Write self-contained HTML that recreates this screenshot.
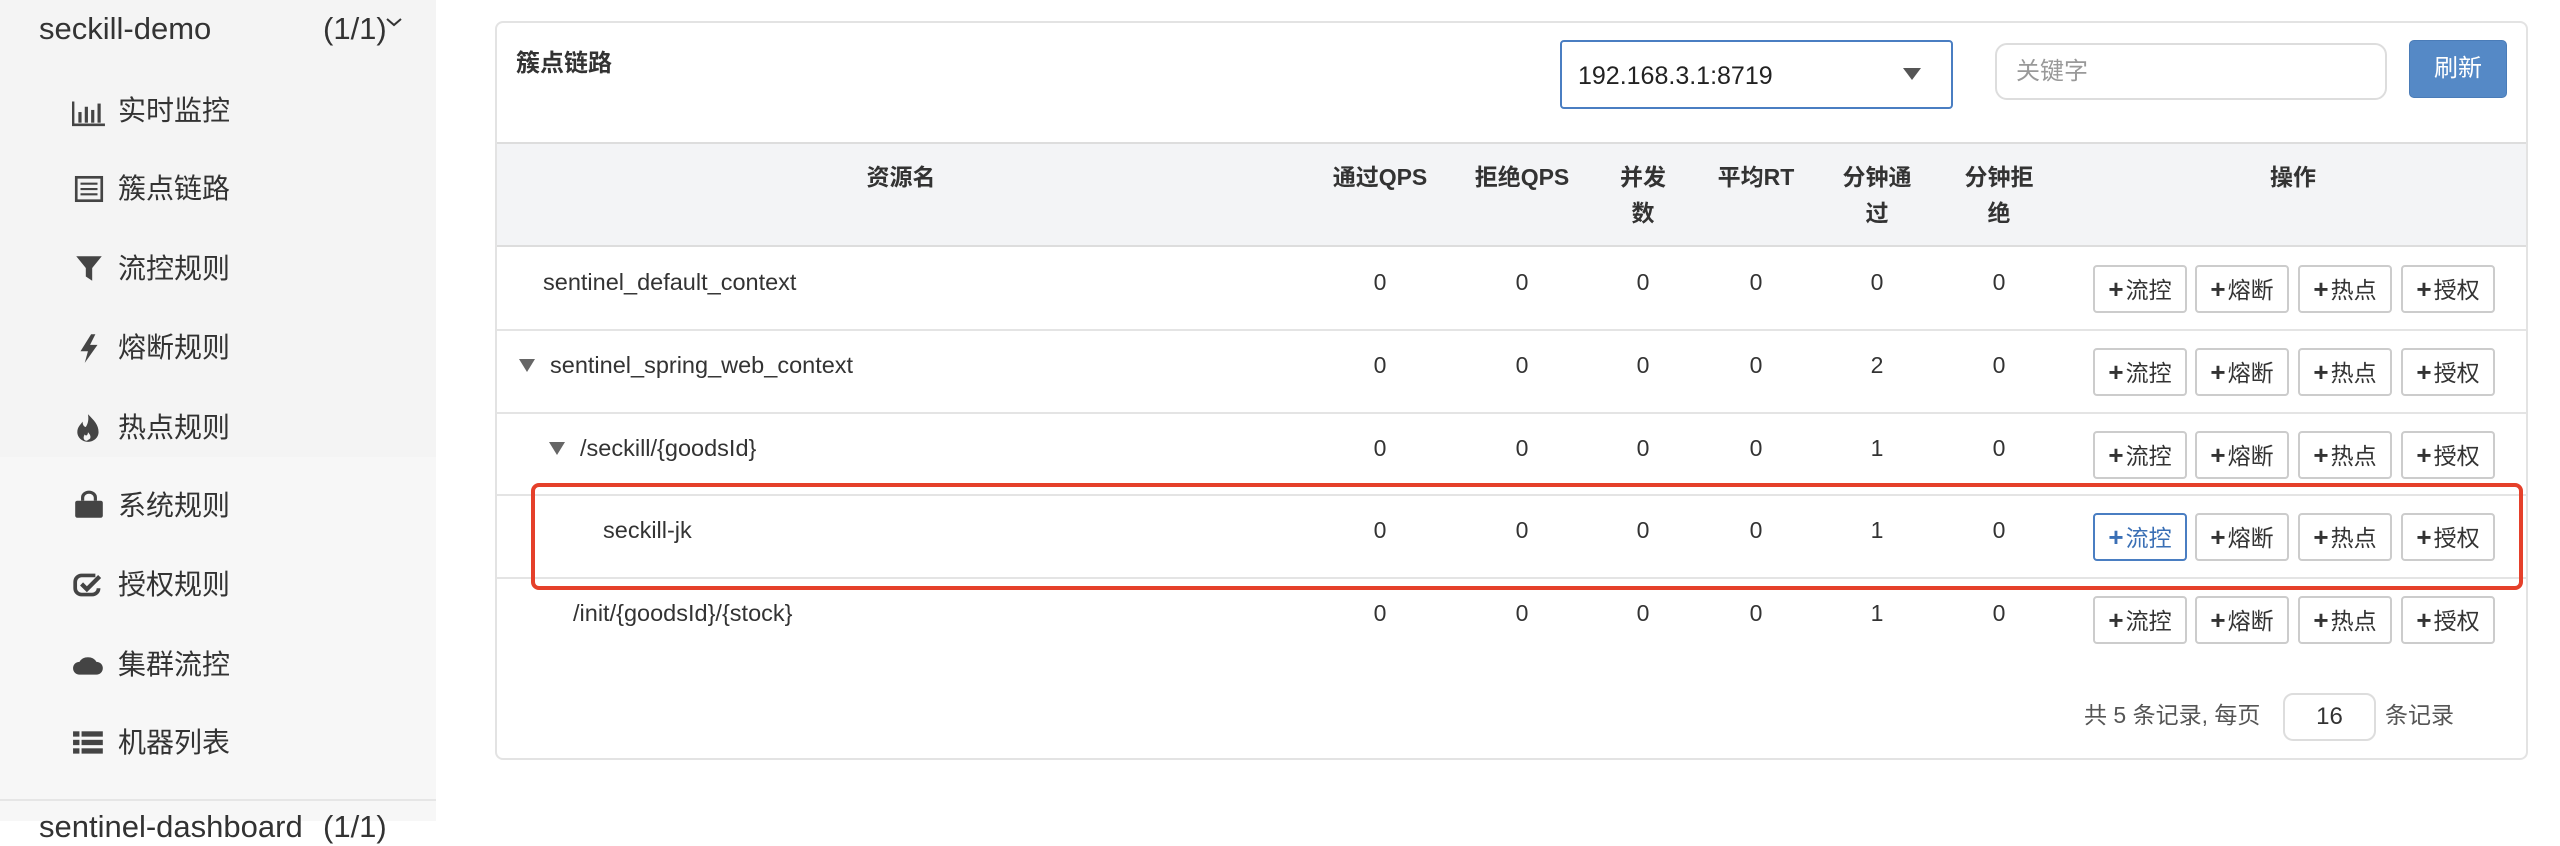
<!DOCTYPE html>
<html><head><meta charset="utf-8"><style>
*{margin:0;padding:0;box-sizing:border-box}
body{width:2560px;height:821px;overflow:hidden;background:#fff;font-family:"Liberation Sans","Noto Sans CJK SC",sans-serif;color:#333;position:relative}
.a{position:absolute;white-space:nowrap}
#side{position:absolute;left:0;top:0;width:436px;height:821px;background:#f7f7f7}
#side .top{position:absolute;left:0;top:0;width:436px;height:457px;background:#f4f4f4}
.si{position:absolute;left:118px;font-size:28px;color:#333;line-height:34px}
.ic{position:absolute;left:72px;width:34px;height:32px}
.panel{position:absolute;left:495px;top:21px;width:2033px;height:739px;border:2px solid #e3e3e3;border-radius:8px;background:#fff}
.th{position:absolute;font-size:23px;color:#333;text-align:center;line-height:36px;font-weight:bold}
.td{position:absolute;font-size:23.5px;color:#333;line-height:30px}
.num{position:absolute;font-size:23px;color:#333;width:60px;text-align:center;line-height:30px}
.btn{position:absolute;width:94px;height:48px;border:2px solid #ccc;border-radius:4px;background:#fff;font-size:23px;line-height:44px;text-align:center;color:#333}
.btn b{font-size:26px;margin-right:2px}
.hl{position:absolute;left:497px;width:2029px;height:2px;background:#e4e4e4}
</style></head><body>
<div id="side"><div class="top"></div>
<div class="a" style="left:39px;top:10px;font-size:31px;line-height:38px">seckill-demo</div>
<div class="a" style="left:323px;top:10px;font-size:31px;line-height:38px">(1/1)</div>
<svg class="a" style="left:386px;top:18px" width="16" height="10"><path d="M1 1l7 6 7-6" stroke="#333" stroke-width="2" fill="none"/></svg>
<svg class="ic" style="top:95px" viewBox="0 0 32 30"><path d="M1 6v22h30" stroke="#444" stroke-width="2.5" fill="none"/><rect x="6" y="16" width="3" height="10" fill="#444"/><rect x="12" y="11" width="3" height="15" fill="#444"/><rect x="18" y="14" width="3" height="12" fill="#444"/><rect x="24" y="8" width="3" height="18" fill="#444"/></svg>
<div class="si" style="top:94px">实时监控</div>
<svg class="ic" style="top:173px" viewBox="0 0 32 30"><rect x="4" y="4" width="24" height="22" stroke="#444" stroke-width="2.5" fill="none"/><path d="M8 10h16M8 15h16M8 20h16" stroke="#444" stroke-width="2"/></svg>
<div class="si" style="top:172px">簇点链路</div>
<svg class="ic" style="top:253px" viewBox="0 0 32 30"><path d="M4 3h24l-9 11v12l-6-4v-8z" fill="#444"/></svg>
<div class="si" style="top:252px">流控规则</div>
<svg class="ic" style="top:332px" viewBox="0 0 32 30"><path d="M18 2l-10 16h7l-3 11 12-17h-7l5-10z" fill="#444"/></svg>
<div class="si" style="top:331px">熔断规则</div>
<svg class="ic" style="top:412px" viewBox="0 0 32 30"><path d="M15 2c6 6 10 10 10 17a10 9 0 0 1-20 0c0-5 3-7 5-10 0 4 2 5 3 5 2-3 3-7 2-12z" fill="#444"/><path d="M14 27c-3 0-4-3-2-6 1 2 3 1 3-2 2 2 3 4 2 6z" fill="#f4f4f4"/></svg>
<div class="si" style="top:411px">热点规则</div>
<svg class="ic" style="top:490px" viewBox="0 0 32 30"><path d="M10 10V7a6 5 0 0 1 12 0v3" stroke="#444" stroke-width="3" fill="none"/><rect x="3" y="10" width="26" height="16" rx="2" fill="#444"/></svg>
<div class="si" style="top:489px">系统规则</div>
<svg class="ic" style="top:569px" viewBox="0 0 32 30"><path d="M22 6H9a6 6 0 0 0-6 6v6a6 6 0 0 0 6 6h10a6 6 0 0 0 6-6" stroke="#444" stroke-width="3.5" fill="none"/><path d="M9 14l5 5 12-12" stroke="#444" stroke-width="4" fill="none"/></svg>
<div class="si" style="top:568px">授权规则</div>
<svg class="ic" style="top:649px" viewBox="0 0 32 30"><path d="M7 24a6 6 0 0 1 0-12 9 8 0 0 1 16 0 6 6 0 0 1 0 12z" fill="#444"/></svg>
<div class="si" style="top:648px">集群流控</div>
<svg class="ic" style="top:727px" viewBox="0 0 32 30"><rect x="1" y="4" width="6" height="5" fill="#444"/><rect x="9" y="4" width="20" height="5" fill="#444"/><rect x="1" y="12" width="6" height="5" fill="#444"/><rect x="9" y="12" width="20" height="5" fill="#444"/><rect x="1" y="20" width="6" height="5" fill="#444"/><rect x="9" y="20" width="20" height="5" fill="#444"/></svg>
<div class="si" style="top:726px">机器列表</div>
<div class="a" style="left:0;top:799px;width:436px;height:2px;background:#e6e6e6"></div>
<div class="a" style="left:39px;top:808px;font-size:31px;line-height:38px;color:#333">sentinel-dashboard</div>
<div class="a" style="left:323px;top:808px;font-size:31px;line-height:38px">(1/1)</div>
</div>

<div class="panel"></div>
<div class="a" style="left:516px;top:49px;font-size:24px;font-weight:bold;line-height:30px">簇点链路</div>
<div class="a" style="left:1560px;top:40px;width:393px;height:69px;border:2px solid #4a7ec2;border-radius:4px;background:#fff"></div>
<div class="a" style="left:1578px;top:61px;font-size:25px;line-height:30px;color:#222">192.168.3.1:8719</div>
<svg class="a" style="left:1903px;top:68px" width="18" height="12"><path d="M0 0h18l-9 12z" fill="#555"/></svg>
<div class="a" style="left:1995px;top:43px;width:392px;height:57px;border:2px solid #ddd;border-radius:12px;background:#fff"></div>
<div class="a" style="left:2016px;top:57px;font-size:24px;line-height:30px;color:#999">关键字</div>
<div class="a" style="left:2409px;top:40px;width:98px;height:58px;background:#5589c6;border:1px solid #4a7cb8;border-radius:5px;color:#fff;font-size:24px;line-height:56px;text-align:center">刷新</div>

<div class="a" style="left:497px;top:142px;width:2029px;height:105px;background:#f3f4f6;border-top:2px solid #ddd;border-bottom:2px solid #ddd"></div>
<div class="th" style="left:851px;top:159px;width:100px">资源名</div>
<div class="th" style="left:1315px;top:159px;width:130px">通过QPS</div>
<div class="th" style="left:1457px;top:159px;width:130px">拒绝QPS</div>
<div class="th" style="left:1613px;top:159px;width:60px">并发<br>数</div>
<div class="th" style="left:1701px;top:159px;width:110px">平均RT</div>
<div class="th" style="left:1832px;top:159px;width:90px">分钟通<br>过</div>
<div class="th" style="left:1954px;top:159px;width:90px">分钟拒<br>绝</div>
<div class="th" style="left:2253px;top:159px;width:80px">操作</div>

<div class="hl" style="top:329px"></div>
<div class="hl" style="top:412px"></div>
<div class="hl" style="top:494px"></div>
<div class="hl" style="top:577px"></div>

<div id="rows"></div>
<div class="td" style="left:543px;top:267px">sentinel_default_context</div>
<svg class="a" style="left:519px;top:359px" width="16" height="13"><path d="M0 0h16l-8 13z" fill="#666"/></svg>
<div class="td" style="left:550px;top:350px">sentinel_spring_web_context</div>
<svg class="a" style="left:549px;top:442px" width="16" height="13"><path d="M0 0h16l-8 13z" fill="#666"/></svg>
<div class="td" style="left:580px;top:433px">/seckill/{goodsId}</div>
<div class="td" style="left:603px;top:515px">seckill-jk</div>
<div class="td" style="left:573px;top:598px">/init/{goodsId}/{stock}</div>

<script>
var tops=[267,350,433,515,598],vals=[[0,0,0,0,0,0],[0,0,0,0,2,0],[0,0,0,0,1,0],[0,0,0,0,1,0],[0,0,0,0,1,0]];
var cx=[1380,1522,1643,1756,1877,1999],bx=[2093,2195,2298,2401],bl=["流控","熔断","热点","授权"];
var h="";
for(var r=0;r<5;r++){for(var c=0;c<6;c++)h+='<div class="num" style="left:'+(cx[c]-30)+'px;top:'+tops[r]+'px">'+vals[r][c]+'</div>';
for(var b=0;b<4;b++){var hi=(r==3&&b==0);h+='<div class="btn" style="left:'+bx[b]+'px;top:'+(tops[r]-2)+'px;'+(hi?'border-color:#4a7ec2;color:#3a6fb5':'')+'"><b>+</b>'+bl[b]+'</div>';}}
document.getElementById("rows").innerHTML=h;
</script>

<div class="a" style="left:531px;top:483px;width:1992px;height:107px;border:4px solid #e5402a;border-radius:8px"></div>

<div class="a" style="left:2084px;top:700px;font-size:23px;line-height:30px;color:#555">共 5 条记录, 每页</div>
<div class="a" style="left:2283px;top:693px;width:93px;height:48px;border:2px solid #ddd;border-radius:10px;font-size:24px;line-height:44px;text-align:center;color:#333">16</div>
<div class="a" style="left:2385px;top:700px;font-size:23px;line-height:30px;color:#555">条记录</div>
</body></html>
